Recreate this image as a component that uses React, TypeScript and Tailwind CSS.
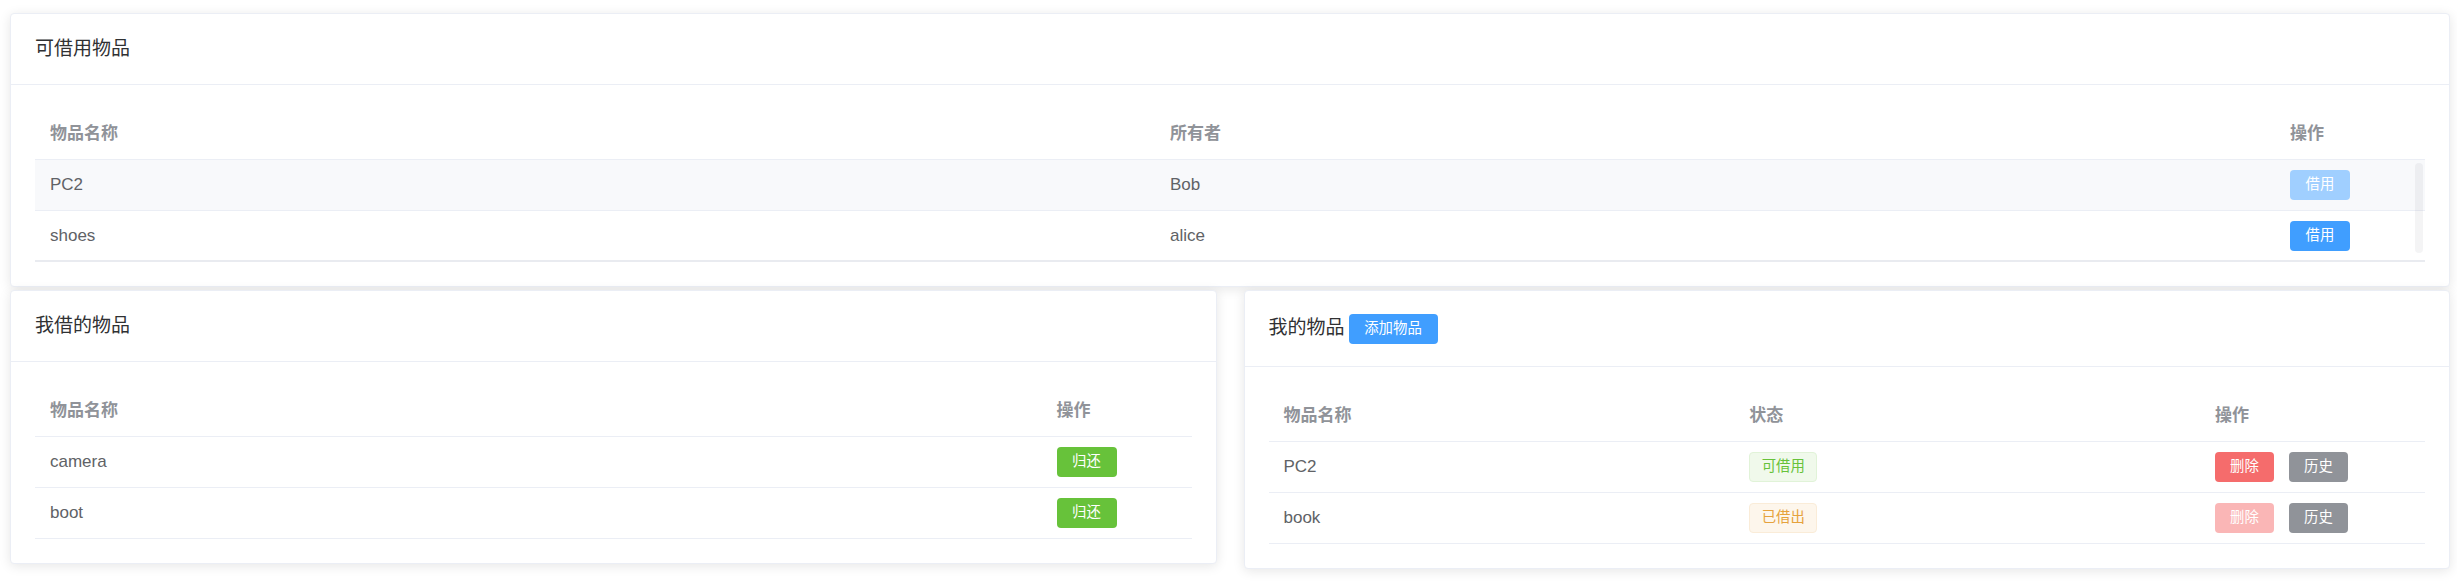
import React from 'react';

type Row = { key: string; cells: React.ReactNode[]; hover?: boolean };

const fontCls = "[font-family:'Liberation_Sans','Noto_Sans_CJK_SC',sans-serif]";

const Btn: React.FC<{ color: string; w: string; children: React.ReactNode }> = ({ color, w, children }) => (
  <span className={`inline-flex h-[30px] items-center justify-center rounded-[4px] text-[14.4px] text-white ${color} ${w}`}>
    {children}
  </span>
);

const Card: React.FC<{ header: React.ReactNode; children: React.ReactNode }> = ({ header, children }) => (
  <div className="rounded-[4px] border border-[#ebeef5] bg-white shadow-[0_2px_12px_0_rgba(0,0,0,0.1)]">
    <div className="border-b border-[#ebeef5] px-[24px] py-[21px]">{header}</div>
    <div className="p-[24px]">{children}</div>
  </div>
);

const Table: React.FC<{ cols: string; heads: string[]; rows: Row[]; scrollbar?: boolean; thickBottom?: boolean }> = ({
  cols,
  heads,
  rows,
  scrollbar,
  thickBottom,
}) => (
  <div className="text-[17px]">
    <div className={`grid h-[51px] items-center border-b border-[#ebeef5] font-bold text-[#909399] ${cols}`}>
      {heads.map((h) => (
        <div key={h} className="px-[15px]">{h}</div>
      ))}
    </div>
    <div className="relative">
      {rows.map((r, i) => (
        <div
          key={r.key}
          className={`grid h-[51px] items-center text-[#606266] ${cols} ${r.hover ? 'bg-[#f8f9fb]' : ''} ${
            thickBottom && i === rows.length - 1 ? 'border-b-2 border-[#e9ebf0]' : 'border-b border-[#ebeef5]'
          }`}
        >
          {r.cells.map((c, j) => (
            <div key={j} className="px-[15px]">{c}</div>
          ))}
        </div>
      ))}
      {scrollbar && (
        <div className="absolute right-[2px] top-[3px] bottom-[9px] w-[8px] rounded-full bg-[rgba(144,147,153,0.1)]" />
      )}
    </div>
  </div>
);

const Tag: React.FC<{ kind: 'ok' | 'out'; children: React.ReactNode }> = ({ kind, children }) => (
  <span
    className={`inline-flex h-[30px] w-[68px] items-center justify-center rounded-[4px] border text-[14.4px] ${
      kind === 'ok' ? 'border-[#e1f3d8] bg-[#f0f9eb] text-[#67c23a]' : 'border-[#faecd8] bg-[#fdf6ec] text-[#e6a23c]'
    }`}
  >
    {children}
  </span>
);

const Title: React.FC<{ children: React.ReactNode }> = ({ children }) => (
  <div className="flex h-[28px] items-center text-[19px] text-[#303133]">{children}</div>
);

export default function App() {
  const available: Row[] = [
    { key: 'pc2', hover: true, cells: ['PC2', 'Bob', <Btn color="bg-[#a0cfff]" w="w-[60px]">借用</Btn>] },
    { key: 'shoes', cells: ['shoes', 'alice', <Btn color="bg-[#409eff]" w="w-[60px]">借用</Btn>] },
  ];

  const borrowed: Row[] = [
    { key: 'camera', cells: ['camera', <Btn color="bg-[#67c23a]" w="w-[60px]">归还</Btn>] },
    { key: 'boot', cells: ['boot', <Btn color="bg-[#67c23a]" w="w-[60px]">归还</Btn>] },
  ];

  const mine: Row[] = [
    {
      key: 'pc2',
      cells: [
        'PC2',
        <Tag kind="ok">可借用</Tag>,
        <div className="flex gap-[15px]">
          <Btn color="bg-[#f56c6c]" w="w-[59px]">删除</Btn>
          <Btn color="bg-[#909399]" w="w-[59px]">历史</Btn>
        </div>,
      ],
    },
    {
      key: 'book',
      cells: [
        'book',
        <Tag kind="out">已借出</Tag>,
        <div className="flex gap-[15px]">
          <Btn color="bg-[#fab6b6]" w="w-[59px]">删除</Btn>
          <Btn color="bg-[#909399]" w="w-[59px]">历史</Btn>
        </div>,
      ],
    },
  ];

  return (
    <div className={`min-h-screen bg-white pl-[10px] pr-[7px] pt-[13px] ${fontCls}`}>
      <Card header={<Title>可借用物品</Title>}>
        <Table
          cols="grid-cols-[1fr_1fr_150px]"
          heads={['物品名称', '所有者', '操作']}
          rows={available}
          scrollbar
          thickBottom
        />
      </Card>

      <div className="mt-[3px] grid grid-cols-2 items-start gap-x-[27px]">
        <Card header={<Title>我借的物品</Title>}>
          <Table cols="grid-cols-[1fr_150px]" heads={['物品名称', '操作']} rows={borrowed} />
        </Card>

        <Card
          header={
            <div className="flex h-[33px] items-center text-[19px] text-[#303133]">
              我的物品
              <span className="ml-[4px]">
                <Btn color="bg-[#409eff]" w="w-[89px]">添加物品</Btn>
              </span>
            </div>
          }
        >
          <Table cols="grid-cols-[1fr_1fr_225px]" heads={['物品名称', '状态', '操作']} rows={mine} />
        </Card>
      </div>
    </div>
  );
}
